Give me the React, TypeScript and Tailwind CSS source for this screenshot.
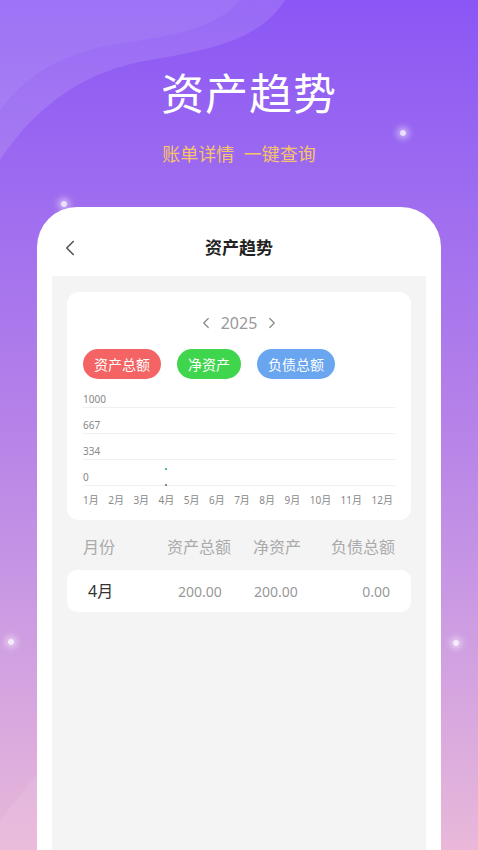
import React from 'react';
import { ChevronLeft, ChevronRight } from 'lucide-react';

const months = ['1月', '2月', '3月', '4月', '5月', '6月', '7月', '8月', '9月', '10月', '11月', '12月'];
const ticks = ['1000', '667', '334', '0'];

function Sparkle({ className }: { className: string }) {
    return (
        <div className={`absolute w-[6px] h-[6px] rounded-full bg-white/80 shadow-[0_0_6px_3px_rgba(255,255,255,0.5)] ${className}`} />
    );
}

export default function App() {
    return (
        <div
            className="relative w-[478px] h-[850px] overflow-hidden bg-gradient-to-b from-[#8b56f5] via-[#b682e8] to-[#e9b8d9]"
            style={{ fontFamily: '"Noto Sans", "Noto Sans CJK SC", sans-serif' }}
        >
            {/* background wave */}
            <svg className="absolute left-0 top-0" width="478" height="260" viewBox="0 0 478 260">
                <path d="M0 0 H285 C260 40 210 50 150 60 C90 70 40 100 0 160 Z" fill="#ffffff" opacity="0.12" />
                <path d="M0 0 H240 C220 25 180 35 130 42 C70 50 30 70 0 110 Z" fill="#ffffff" opacity="0.06" />
            </svg>
            <svg className="absolute left-0 bottom-0" width="60" height="120" viewBox="0 0 60 120">
                <path d="M0 120 L0 90 L40 40 L60 60 L60 120 Z" fill="#ffffff" opacity="0.08" />
            </svg>
            <Sparkle className="left-[400px] top-[130px]" />
            <Sparkle className="left-[61px] top-[201px]" />
            <Sparkle className="left-[8px] top-[639px]" />
            <Sparkle className="left-[453px] top-[640px]" />

            <div className="relative flex flex-col items-center">
                <h1 className="mt-[66px] ml-[20px] text-[43px] leading-[56px] text-white font-normal tracking-[1px]">资产趋势</h1>
                <p className="mt-[20px] text-[18px] leading-[24px] text-[#f7c46a]">账单详情&nbsp;&nbsp;一键查询</p>

                <div className="mt-[41px] w-[404px] h-[700px] bg-white rounded-t-[40px] flex flex-col">
                    <div className="relative h-[69px] flex items-center justify-center">
                        <ChevronLeft className="absolute left-[20px] top-[28px] text-[#555]" size={26} strokeWidth={1.5} />
                        <span className="mt-[12px] text-[17px] font-bold text-[#222]">资产趋势</span>
                    </div>

                    <div className="mx-[15px] flex-1 bg-[#f4f4f4] pt-[16px] px-[15px]">
                        {/* chart card */}
                        <div className="bg-white rounded-[12px] h-[228px] px-[16px] pt-[20px]">
                            <div className="flex items-center justify-center gap-[6px] text-[#888]">
                                <ChevronLeft size={18} strokeWidth={1.6} />
                                <span className="text-[16px] leading-[22px] text-[#999]">2025</span>
                                <ChevronRight size={18} strokeWidth={1.6} />
                            </div>

                            <div className="mt-[15px] flex gap-[16px]">
                                <span className="h-[30px] px-[11px] rounded-full bg-[#f46464] text-white text-[14px] flex items-center">资产总额</span>
                                <span className="h-[30px] px-[11px] rounded-full bg-[#3fd64e] text-white text-[14px] flex items-center">净资产</span>
                                <span className="h-[30px] px-[11px] rounded-full bg-[#6aa5ef] text-white text-[14px] flex items-center">负债总额</span>
                            </div>

                            <div className="relative mt-[3px]">
                                {ticks.map((t) => (
                                    <div key={t} className="h-[26px] flex flex-col justify-end">
                                        <span className="text-[10px] leading-[12px] text-[#888]">{t}</span>
                                        <div className="mt-[2px] h-px bg-[#f0f0f0]" />
                                    </div>
                                ))}
                                <div className="absolute left-[82px] top-[86px] w-[2px] h-[2px] bg-[#4db6ac]" />
                                <div className="absolute left-[82px] top-[102px] w-[2px] h-[2px] bg-[#7a8aa0]" />
                            </div>

                            <div className="mt-[8px] flex justify-between text-[10px] leading-[12px] text-[#888] pr-[2px]">
                                {months.map((m) => (
                                    <span key={m}>{m}</span>
                                ))}
                            </div>
                        </div>

                        {/* table header */}
                        <div className="mt-[16px] flex items-center h-[22px] text-[16px] text-[#aaa] px-[16px]">
                            <span className="w-[84px]">月份</span>
                            <span className="w-[86px]">资产总额</span>
                            <span className="w-[70px] text-left">净资产</span>
                            <span className="flex-1 text-right">负债总额</span>
                        </div>

                        <div className="mt-[12px] bg-white rounded-[10px] h-[42px] flex items-center px-[16px]">
                            <span className="w-[95px] pl-[5px] text-[16px] text-[#333]">4月</span>
                            <span className="w-[76px] text-[14px] text-[#999]">200.00</span>
                            <span className="w-[76px] text-[14px] text-[#999]">200.00</span>
                            <span className="flex-1 text-right pr-[5px] text-[14px] text-[#999]">0.00</span>
                        </div>
                    </div>
                </div>
            </div>
        </div>
    );
}
